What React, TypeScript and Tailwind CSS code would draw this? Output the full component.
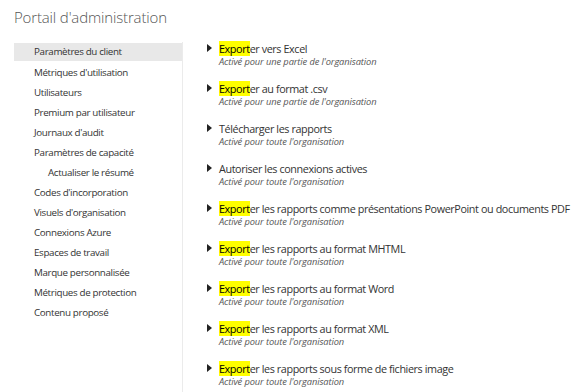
import React from "react";

const nav: { label: string; indent?: boolean; active?: boolean }[] = [
  { label: "Paramètres du client", active: true },
  { label: "Métriques d'utilisation" },
  { label: "Utilisateurs" },
  { label: "Premium par utilisateur" },
  { label: "Journaux d'audit" },
  { label: "Paramètres de capacité" },
  { label: "Actualiser le résumé", indent: true },
  { label: "Codes d'incorporation" },
  { label: "Visuels d'organisation" },
  { label: "Connexions Azure" },
  { label: "Espaces de travail" },
  { label: "Marque personnalisée" },
  { label: "Métriques de protection" },
  { label: "Contenu proposé" },
];

const items: { hl: boolean; rest: string; sub: string }[] = [
  { hl: true, rest: "er vers Excel", sub: "Activé pour une partie de l'organisation" },
  { hl: true, rest: "er au format .csv", sub: "Activé pour une partie de l'organisation" },
  { hl: false, rest: "Télécharger les rapports", sub: "Activé pour toute l'organisation" },
  { hl: false, rest: "Autoriser les connexions actives", sub: "Activé pour toute l'organisation" },
  { hl: true, rest: "er les rapports comme présentations PowerPoint ou documents PDF", sub: "Activé pour toute l'organisation" },
  { hl: true, rest: "er les rapports au format MHTML", sub: "Activé pour toute l'organisation" },
  { hl: true, rest: "er les rapports au format Word", sub: "Activé pour toute l'organisation" },
  { hl: true, rest: "er les rapports au format XML", sub: "Activé pour toute l'organisation" },
  { hl: true, rest: "er les rapports sous forme de fichiers image", sub: "Activé pour toute l'organisation" },
];

export default function App() {
  return (
    <div
      className="w-[576px] h-[392px] overflow-hidden bg-white text-[#333]"
      style={{ fontFamily: '"Open Sans", "Noto Sans", sans-serif' }}
    >
      <div className="pl-[14px] pt-[6px] h-[42px] text-[15px] font-light text-[#555] tracking-[-0.15px]">
        Portail d'administration
      </div>
      <div className="flex">
        <div className="w-[169px] ml-[14px] border-r border-[#ebebeb] h-[350px] shrink-0">
          {nav.map((n, i) => (
            <div
              key={i}
              className={`flex items-center text-[9.8px] text-[#333] tracking-[-0.35px] ${
                n.indent ? "pl-[34px]" : "pl-[20px]"
              } ${n.active ? "bg-[#e8e8e8] h-[18px] mt-[1px] mb-[2px]" : "h-[20px]"}`}
            >
              {n.label}
            </div>
          ))}
        </div>
        <div className="flex flex-col pl-[24px] pt-0">
          {items.map((it, i) => (
            <div key={i} className="h-[40px] flex">
              <div className="w-[12px] pt-[2px]">
                <svg width="5" height="8" viewBox="0 0 5 8">
                  <path d="M0 0 L5 4 L0 8 Z" fill="#222" />
                </svg>
              </div>
              <div className="flex flex-col">
                <div className="text-[10.8px] leading-[13px] text-[#333] tracking-[-0.4px] whitespace-nowrap">
                  {it.hl && <span className="bg-[#ffff00] text-black">Export</span>}
                  {it.rest}
                </div>
                <div className="text-[9.3px] leading-[13px] italic text-[#555] tracking-[-0.1px] whitespace-nowrap">
                  {it.sub}
                </div>
              </div>
            </div>
          ))}
        </div>
      </div>
    </div>
  );
}
